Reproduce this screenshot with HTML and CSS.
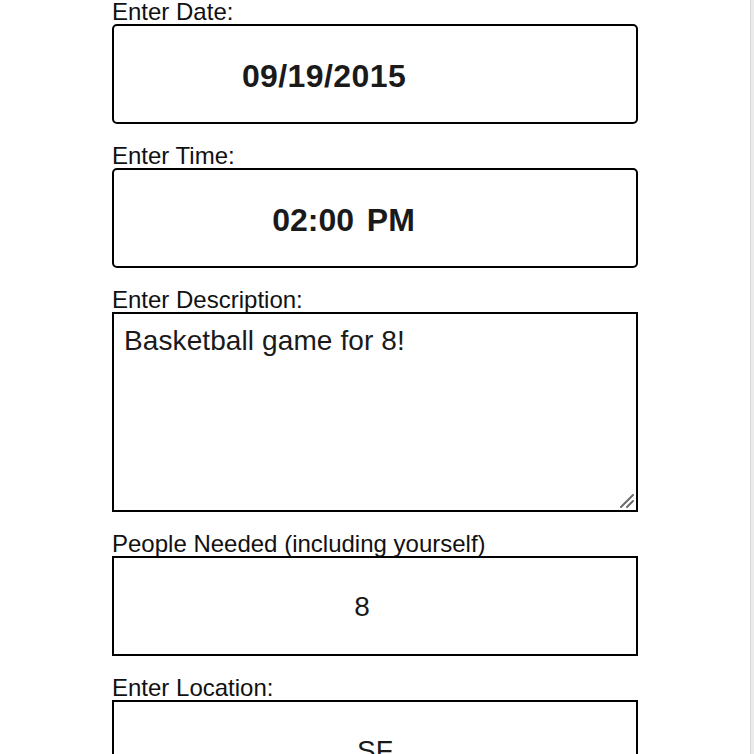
FILE: index.html
```html
<!DOCTYPE html>
<html lang="en">
<head>
<meta charset="utf-8">
<title>Create Event</title>
<link rel="stylesheet" href="styles.css">
</head>
<body>
<form class="form">
  <div class="field">
    <label class="label">Enter Date:</label>
    <div class="box box-rounded box-strong shift-date">09/19/2015</div>
  </div>
  <div class="field">
    <label class="label">Enter Time:</label>
    <div class="box box-rounded box-strong shift-time">02:00 PM</div>
  </div>
  <div class="field">
    <label class="label">Enter Description:</label>
    <div class="area">Basketball game for 8!
      <svg class="grip" width="14" height="14" viewBox="0 0 14 14"><path d="M1 13 L13 1 M7 13 L13 7" stroke="#6b6b6b" stroke-width="2" stroke-linecap="round" fill="none"/></svg>
    </div>
  </div>
  <div class="field">
    <label class="label">People Needed (including yourself)</label>
    <div class="box shift-num">8</div>
  </div>
  <div class="field">
    <label class="label">Enter Location:</label>
    <div class="box">SF</div>
  </div>
</form>
<div class="scroll-edge"></div>
</body>
</html>
```

FILE: styles.css
```css
html {
  overflow: hidden;
}
body {
  margin: 0;
  background: #ffffff;
  color: #111111;
  font-family: "Liberation Sans", Arial, Helvetica, sans-serif;
}
.form {
  margin-left: 112px;
  width: 526px;
  display: flex;
  flex-direction: column;
  gap: 20px;
}
.field {
  display: flex;
  flex-direction: column;
}
.label {
  display: block;
  font-size: 24px;
  line-height: 24px;
  height: 24px;
  white-space: nowrap;
}
.box {
  box-sizing: border-box;
  height: 100px;
  border: 2px solid #000;
  display: flex;
  align-items: center;
  justify-content: center;
  padding-top: 2px;
  font-size: 28px;
  color: #1a1a1a;
}
.box-rounded {
  border-radius: 5px;
}
.box-strong {
  font-weight: bold;
  font-size: 32px;
  padding-top: 4px;
  white-space: pre;
}
.shift-date {
  padding-right: 102px;
  letter-spacing: 0.4px;
}
.shift-time {
  padding-right: 63px;
  word-spacing: 4px;
}
.shift-num {
  padding-right: 26px;
}
.area {
  position: relative;
  box-sizing: border-box;
  height: 200px;
  border: 2px solid #000;
  padding: 11px 10px;
  font-size: 28px;
  letter-spacing: 0.1px;
  color: #1a1a1a;
}
.grip {
  position: absolute;
  right: 2px;
  bottom: 2px;
}
.scroll-edge {
  position: fixed;
  top: 0;
  right: 0;
  bottom: 0;
  width: 3px;
  background: #ebebeb;
  border-left: 1px solid #d7d7d7;
}
```
